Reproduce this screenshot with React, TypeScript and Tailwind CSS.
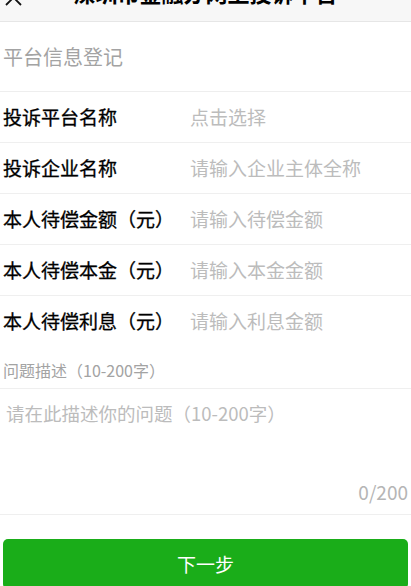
import React from 'react'

const ROWS = [
  { label: '投诉平台名称', placeholder: '点击选择', border: true },
  { label: '投诉企业名称', placeholder: '请输入企业主体全称', border: true },
  { label: '本人待偿金额（元）', placeholder: '请输入待偿金额', border: true },
  { label: '本人待偿本金（元）', placeholder: '请输入本金金额', border: true },
  { label: '本人待偿利息（元）', placeholder: '请输入利息金额', border: false },
]

export default function App() {
  return (
    <div className="w-[411px] h-[586px] overflow-hidden bg-white font-['Noto_Sans_CJK_SC','Noto_Sans',sans-serif]">
      {/* Top bar, scrolled mostly out of view */}
      <div className="relative -mt-[22px] h-[44px] flex items-center justify-center pb-[16px] bg-[#f7f7f7] border-b border-[#e6e6e6]">
        <svg className="absolute left-[5px] top-[11px] w-[17px] h-[17px]" viewBox="0 0 17 17" fill="none" stroke="#111" strokeWidth="1.8">
          <path d="M1 1 L16 16 M16 1 L1 16" />
        </svg>
        <span className="text-[22px] font-bold text-black leading-none">深圳市金融办网上投诉平台</span>
      </div>

      {/* Section title */}
      <div className="h-[70px] flex items-center pl-[3px] border-b border-[#eeeeee]">
        <span className="text-[20px] text-[#a3a3a3]">平台信息登记</span>
      </div>

      {/* Form rows */}
      {ROWS.map(r => (
        <div key={r.label} className={`flex items-center h-[51px] pl-[3px] ${r.border ? 'border-b border-[#efefef]' : ''}`}>
          <span className="w-[187px] shrink-0 text-[19px] font-normal text-black [-webkit-text-stroke:0.3px_#000]">{r.label}</span>
          <span className="text-[19px] text-[#bcbcbc]">{r.placeholder}</span>
        </div>
      ))}

      {/* Description */}
      <div className="h-[42px] pt-[11px] pl-[3px] border-b border-[#efefef]">
        <span className="text-[16px] text-[#a3a3a3] leading-[24px]">问题描述（10-200字）</span>
      </div>
      <div className="h-[126px] flex flex-col justify-between pt-[11px] pb-[9px] pl-[6px] pr-[3px] border-b border-[#efefef]">
        <span className="text-[18.5px] text-[#bcbcbc] leading-[26px]">请在此描述你的问题（10-200字）</span>
        <span className="self-end text-[19px] text-[#b5b5b5] leading-[26px]">0/200</span>
      </div>

      {/* Next button */}
      <div className="px-[3px] mt-[24px]">
        <button type="button" className="w-full h-[50px] rounded-[5px] bg-[#1aad19] text-white text-[19px]">
          下一步
        </button>
      </div>
    </div>
  )
}
